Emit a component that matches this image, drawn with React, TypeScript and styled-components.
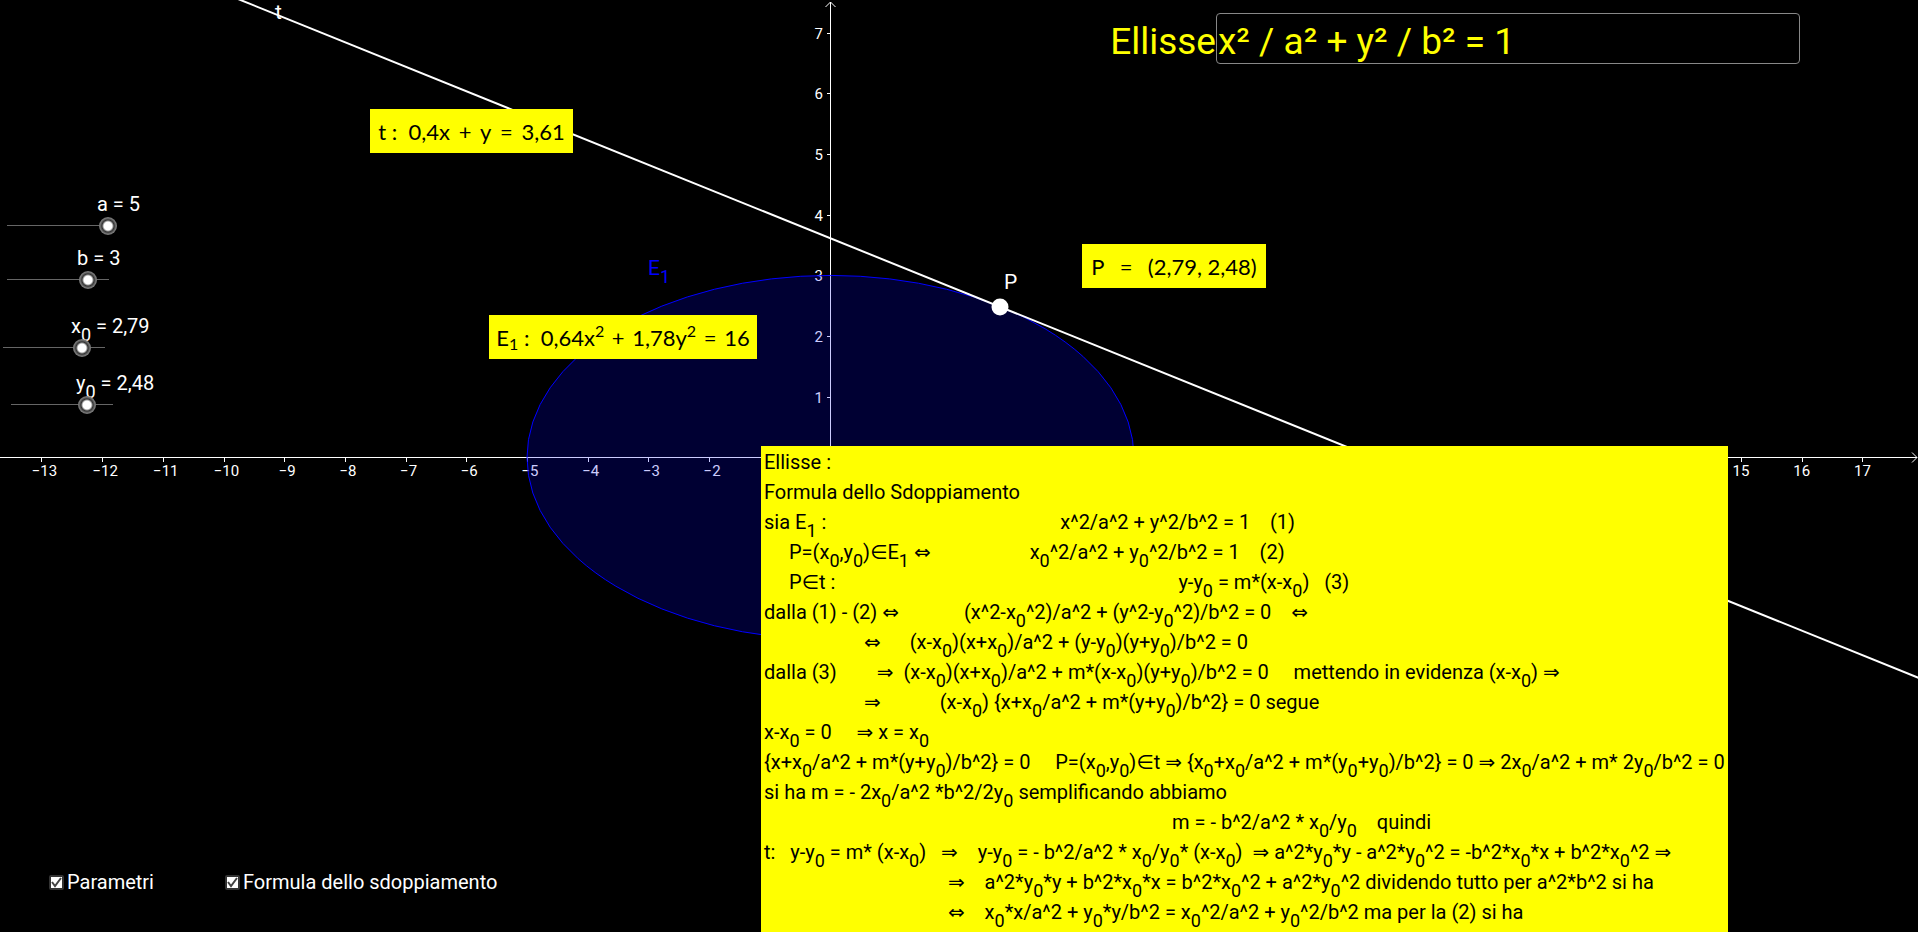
import React from "react";
import styled, { createGlobalStyle } from "styled-components";

const Global = createGlobalStyle`
  * { box-sizing: border-box; }
  html, body { margin: 0; background: #fff; }
  body { font-family: Roboto, "DejaVu Sans", sans-serif; overflow: hidden; }
`;

const UNIT = 60.7;
const OX = 830.5;
const OY = 457.5;
const px = (x: number) => OX + x * UNIT;
const py = (y: number) => OY - y * UNIT;

const Canvas = styled.main`
  position: relative;
  min-height: calc(100vh - 2px);
  margin-right: 2px;
  display: flex;
  flex-direction: column;
  background: #000;
  color: #fff;
  overflow: hidden;
`;

const Graph = styled.svg`
  position: absolute;
  inset: 0;
  width: 100%;
  height: 100%;
  font-family: Roboto, sans-serif;
`;

/* Boxes pinned on the drawing canvas by the construction. */
const Pinned = styled.div<{ $x: number; $y: number }>`
  position: absolute;
  left: ${(p) => p.$x}px;
  top: ${(p) => p.$y}px;
`;

const Sub = styled.sub`
  font-size: 18px;
  line-height: 0;
  vertical-align: -8px;
`;

const Header = styled.header`
  position: relative;
  display: flex;
  align-items: center;
  justify-content: flex-end;
  padding: 13px 118px 0 0;
  color: #ff0;
  font-size: 37px;
  line-height: 44px;
  label { padding-top: 6px; }
`;

const TitleInput = styled.input`
  width: 584px;
  height: 51px;
  padding: 6px 1px 0;
  border: 1px solid #888;
  border-radius: 4px;
  background: transparent;
  color: #ff0;
  font: 37px Roboto, sans-serif;
`;

const Sliders = styled.section`
  position: relative;
  flex: 1;
  display: flex;
  flex-direction: column;
  gap: 25px;
  padding-top: 129px;
`;

const SliderPair = styled.div<{ $gap: number }>`
  display: flex;
  flex-direction: column;
  gap: ${(p) => p.$gap}px;
`;

const SliderItem = styled.div<{ $start: number }>`
  display: flex;
  flex-direction: column;
  align-items: flex-start;
  gap: 1px;
  padding-left: ${(p) => p.$start}px;
`;

const SliderLabel = styled.label<{ $indent: number }>`
  padding-left: ${(p) => p.$indent}px;
  font-size: 20px;
  line-height: 22px;
  white-space: pre;
`;

const Slider = styled.input`
  width: 120px;
  height: 20px;
  margin: 0 0 0 -9px;
  appearance: none;
  background: linear-gradient(#666, #666) 9px 9px / 102px 1px no-repeat;
  &::-webkit-slider-thumb {
    appearance: none;
    width: 18px;
    height: 18px;
    border-radius: 50%;
    background: radial-gradient(circle, #fff 0 4px, #333 6px, #777 8px);
  }
`;

const MathBox = styled(Pinned)<{ $w: number }>`
  width: ${(p) => p.$w}px;
  height: 44px;
  padding-top: 1px;
  text-align: center;
  background: #ff0;
  color: #000;
  font: 22px/44px Lato, sans-serif;
  white-space: pre;
  sup, sub { font-size: 16px; line-height: 0; }
  sup { vertical-align: 9px; }
  sub { vertical-align: -4px; }
`;

const Op = styled.span<{ $pad: number }>`
  margin: 0 ${(p) => p.$pad}px;
`;

const Footer = styled.footer`
  position: relative;
  display: flex;
  gap: 71px;
  padding: 0 0 38px 49px;
`;

const Check = styled.div`
  display: flex;
  align-items: center;
  gap: 3px;
  font-size: 20px;
  line-height: 24px;
  label { white-space: pre; }
`;

const TickFrame = styled.span`
  display: grid;
  > * { grid-area: 1 / 1; place-self: center; }
  input {
    appearance: none;
    width: 15px;
    height: 15px;
    margin: 0;
    border: 2px solid #333;
    border-radius: 2px;
    background: #fff;
  }
  svg { position: relative; pointer-events: none; }
  input:not(:checked) + svg { visibility: hidden; }
`;

const Proof = styled(Pinned)`
  bottom: 0;
  width: 967px;
  padding: 1px 3px;
  background: #ff0;
  color: #000;
  font-size: 20px;
  line-height: 30px;
`;

const Line = styled.div`
  height: 30px;
  display: flex;
  white-space: pre;
`;

const Seg = styled.span<{ $gap: number }>`
  margin-left: ${(p) => p.$gap}px;
`;

/* Turns "x_0" into x with a lowered index. */
const rich = (s: string) =>
  s.split(/(_\d)/).map((t, i) => (/^_\d$/.test(t) ? <Sub key={i}>{t[1]}</Sub> : t));

type Piece = [gap: number, text: string];
const proof: Piece[][] = [
  [[0, "Ellisse :"]],
  [[0, "Formula dello Sdoppiamento"]],
  [[0, "sia E_1 :"], [234, "x^2/a^2 + y^2/b^2 = 1    (1)"]],
  [[25, "P=(x_0,y_0)∈E_1 ⇔"], [99, "x_0^2/a^2 + y_0^2/b^2 = 1    (2)"]],
  [[25, "P∈t :"], [343, "y-y_0 = m*(x-x_0)   (3)"]],
  [[0, "dalla (1) - (2) ⇔"], [65, "(x^2-x_0^2)/a^2 + (y^2-y_0^2)/b^2 = 0    ⇔"]],
  [[100, "⇔"], [29, "(x-x_0)(x+x_0)/a^2 + (y-y_0)(y+y_0)/b^2 = 0"]],
  [[0, "dalla (3)"], [40, "⇒  (x-x_0)(x+x_0)/a^2 + m*(x-x_0)(y+y_0)/b^2 = 0     mettendo in evidenza (x-x_0) ⇒"]],
  [[100, "⇒"], [59, "(x-x_0) {x+x_0/a^2 + m*(y+y_0)/b^2} = 0 segue"]],
  [[0, "x-x_0 = 0     ⇒ x = x_0"]],
  [[0, "{x+x_0/a^2 + m*(y+y_0)/b^2} = 0     P=(x_0,y_0)∈t ⇒ {x_0+x_0/a^2 + m*(y_0+y_0)/b^2} = 0 ⇒ 2x_0/a^2 + m* 2y_0/b^2 = 0"]],
  [[0, "si ha m = - 2x_0/a^2 *b^2/2y_0 semplificando abbiamo"]],
  [[408, "m = - b^2/a^2 * x_0/y_0    quindi"]],
  [[0, "t:   y-y_0 = m* (x-x_0)   ⇒    y-y_0 = - b^2/a^2 * x_0/y_0* (x-x_0)  ⇒ a^2*y_0*y - a^2*y_0^2 = -b^2*x_0*x + b^2*x_0^2 ⇒"]],
  [[184, "⇒    a^2*y_0*y + b^2*x_0*x = b^2*x_0^2 + a^2*y_0^2 dividendo tutto per a^2*b^2 si ha"]],
  [[184, "⇔    x_0*x/a^2 + y_0*y/b^2 = x_0^2/a^2 + y_0^2/b^2 ma per la (2) si ha"]],
];

const sliderPairs = [
  {
    gap: 11,
    items: [
      { id: "a", start: 7, label: "a = 5", value: 101, indent: 90 },
      { id: "b", start: 7, label: "b = 3", value: 81, indent: 70 },
    ],
  },
  {
    gap: 14,
    items: [
      { id: "x0", start: 3, label: "x_0 = 2,79", value: 79, indent: 68 },
      { id: "y0", start: 11, label: "y_0 = 2,48", value: 76, indent: 65 },
    ],
  },
];

const checks = [
  { id: "parametri", label: "Parametri" },
  { id: "formula", label: "Formula dello sdoppiamento" },
];

const xs = [-13, -12, -11, -10, -9, -8, -7, -6, -5, -4, -3, -2, 15, 16, 17];
const ys = [1, 2, 3, 4, 5, 6, 7];

export default function App() {
  return (
    <>
      <Global />
      <Canvas>
        <Graph aria-label="Ellisse e retta tangente">
          <g stroke="#fff" fill="none" shapeRendering="crispEdges">
            <path d={`M0 ${OY}H1917M${OX} 2V446`} />
            {xs.map((n) => (
              <path key={n} d={`M${Math.round(px(n)) + 0.5} ${OY}v4`} />
            ))}
            {ys.map((n) => (
              <path key={n} d={`M${OX} ${Math.round(py(n)) + 0.5}h-4`} />
            ))}
          </g>
          <path d={`M${OX - 5} 7L${OX} 2L${OX + 5} 7M1912 ${OY - 5}L1917 ${OY}L1912 ${OY + 5}`} stroke="#fff" fill="none" />
          <g fill="#fff" fontSize="15">
            {xs.map((n) => (
              <text key={n} x={px(n) + (n < 0 ? 3 : 0)} y={476} textAnchor="middle">
                {n < 0 ? `−${-n}` : n}
              </text>
            ))}
            {ys.map((n) => (
              <text key={n} x={823} y={py(n) + 6} textAnchor="end">{n}</text>
            ))}
          </g>
          <ellipse cx={OX} cy={OY} rx={5 * UNIT} ry={3 * UNIT} fill="#00f" fillOpacity="0.2" stroke="#00f" />
          <path d="M238 -1L1919 678" stroke="#fff" strokeWidth="2" />
          <circle cx="1000" cy="307" r="8.5" fill="#fff" />
          <g fontSize="21" fill="#fff">
            <text x="275" y="19">t</text>
            <text x="1004" y="289">P</text>
            <text x="648" y="275" fill="#00f">E<tspan dy="8" fontSize="18">1</tspan></text>
          </g>
        </Graph>

        <MathBox $x={370} $y={109} $w={203}>
          t :  0,4x<Op $pad={3}> + </Op>y<Op $pad={3}> = </Op>3,61
        </MathBox>
        <MathBox $x={489} $y={315} $w={268}>
          E<sub>1</sub> :  0,64x<sup>2</sup><Op $pad={2}> + </Op>1,78y<sup>2</sup><Op $pad={2}> = </Op>16
        </MathBox>
        <MathBox $x={1082} $y={244} $w={184}>
          P<Op $pad={4}>  =  </Op>(2,79, 2,48)
        </MathBox>

        <Proof $x={761} $y={446}>
          {proof.map((line, i) => (
            <Line key={i}>
              {line.map(([gap, text], j) => (
                <Seg key={j} $gap={gap}>{rich(text)}</Seg>
              ))}
            </Line>
          ))}
        </Proof>

        <Header>
          <label htmlFor="equation">Ellisse</label>
          <TitleInput id="equation" defaultValue="x² / a² + y² / b² = 1" />
        </Header>

        <Sliders>
          {sliderPairs.map((pair, i) => (
            <SliderPair key={i} $gap={pair.gap}>
              {pair.items.map((s) => (
                <SliderItem key={s.id} $start={s.start}>
                  <SliderLabel htmlFor={s.id} $indent={s.indent}>{rich(s.label)}</SliderLabel>
                  <Slider id={s.id} type="range" min={0} max={102} defaultValue={s.value} />
                </SliderItem>
              ))}
            </SliderPair>
          ))}
        </Sliders>

        <Footer>
          {checks.map((c) => (
            <Check key={c.id}>
              <TickFrame>
                <input id={c.id} type="checkbox" defaultChecked />
                <svg width="11" height="11" viewBox="0 0 11 11" aria-hidden="true">
                  <path d="M1 5L4 9L10 1" fill="none" stroke="#444" strokeWidth="2" />
                </svg>
              </TickFrame>
              <label htmlFor={c.id}>{c.label}</label>
            </Check>
          ))}
        </Footer>
      </Canvas>
    </>
  );
}
